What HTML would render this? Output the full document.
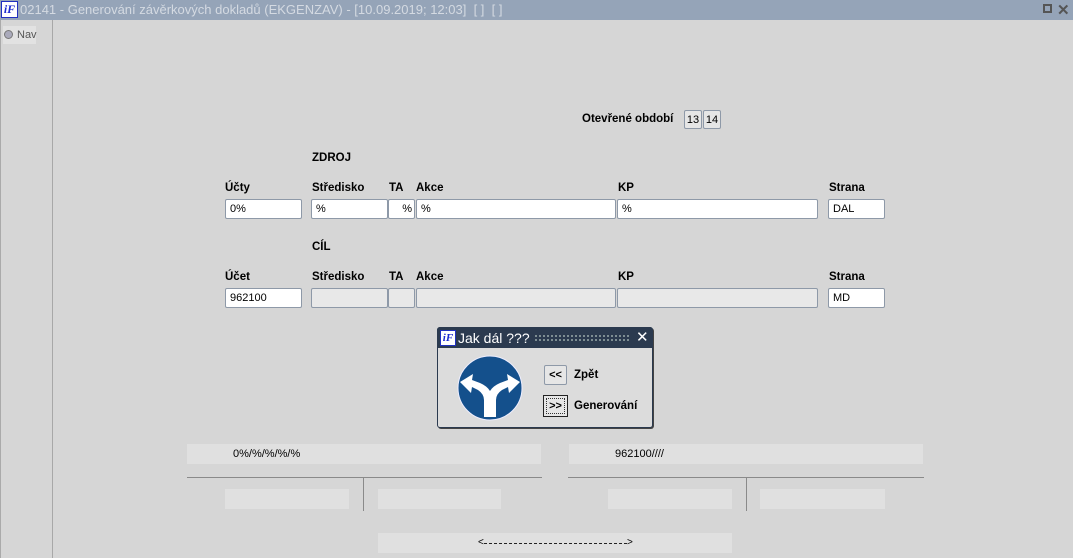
<!DOCTYPE html>
<html><head><meta charset="utf-8"><style>
*{margin:0;padding:0;box-sizing:border-box}
body{width:1073px;height:558px;background:#d6d6d6;position:relative;overflow:hidden;font-family:"Liberation Sans",Arial,sans-serif;font-size:11px;color:#000}
.a{position:absolute}
.lbl{position:absolute;font-weight:bold;font-size:11.5px}
.in{position:absolute;height:20px;background:#fff;border:1px solid #8e99a8;border-radius:2px;padding:3px 0 0 4px;font-size:11px}
.dis{background:#e8e8e8}
.bx{position:absolute;background:#e0e0e0}
</style></head><body>
<div class="a" style="left:0;top:0;width:1073px;height:20px;background:#95a4b8"></div>
<div class="a" style="left:1px;top:1px;width:17px;height:17px;background:#fff;border:1px solid #2030c0;color:#1a2ad0;font:italic bold 12px 'Liberation Serif',serif;text-align:center;line-height:15px">iF</div>
<div class="a" style="left:20px;top:2px;font-size:13px;color:#d4dae2;white-space:nowrap">02141 - Generování závěrkových dokladů (EKGENZAV) - [10.09.2019; 12:03]&nbsp; [ ]&nbsp; [ ]</div>
<div class="a" style="left:1043px;top:4px;width:9px;height:9px;border:2px solid #555"></div>
<div class="a" style="left:1057px;top:1px;color:#555;font-size:15px;font-weight:bold">✕</div>
<div class="a" style="left:0;top:20px;width:53px;height:538px;border-right:1px solid #a8a8a8;border-left:1px solid #aaa"></div>
<div class="a" style="left:3px;top:26px;width:33px;height:18px;background:#e2e2e2"></div>
<div class="a" style="left:4px;top:30px;width:9px;height:9px;border-radius:50%;border:1px solid #777;background:#aab"></div>
<div class="a" style="left:17px;top:29px;color:#555;font-size:11px">Nav</div>

<div class="lbl" style="left:582px;top:113px">Otevřené období</div>
<div class="a" style="left:684px;top:110px;width:18px;height:19px;border:1px solid #8e99a8;background:#e6e6e6;border-radius:2px;text-align:center;padding-top:3px">13</div>
<div class="a" style="left:703px;top:110px;width:18px;height:19px;border:1px solid #8e99a8;background:#e6e6e6;border-radius:2px;text-align:center;padding-top:3px">14</div>

<div class="lbl" style="left:312px;top:152px">ZDROJ</div>
<div class="lbl" style="left:225px;top:182px">Účty</div>
<div class="lbl" style="left:312px;top:182px">Středisko</div>
<div class="lbl" style="left:389px;top:182px">TA</div>
<div class="lbl" style="left:416px;top:182px">Akce</div>
<div class="lbl" style="left:618px;top:182px">KP</div>
<div class="lbl" style="left:829px;top:182px">Strana</div>
<div class="in" style="left:225px;top:199px;width:77px">0%</div>
<div class="in" style="left:311px;top:199px;width:77px">%</div>
<div class="in" style="left:388px;top:199px;width:27px;text-align:right;padding-right:2px">%</div>
<div class="in" style="left:416px;top:199px;width:200px">%</div>
<div class="in" style="left:617px;top:199px;width:201px">%</div>
<div class="in" style="left:828px;top:199px;width:57px">DAL</div>

<div class="lbl" style="left:312px;top:241px">CÍL</div>
<div class="lbl" style="left:225px;top:271px">Účet</div>
<div class="lbl" style="left:312px;top:271px">Středisko</div>
<div class="lbl" style="left:389px;top:271px">TA</div>
<div class="lbl" style="left:416px;top:271px">Akce</div>
<div class="lbl" style="left:618px;top:271px">KP</div>
<div class="lbl" style="left:829px;top:271px">Strana</div>
<div class="in" style="left:225px;top:288px;width:77px">962100</div>
<div class="in dis" style="left:311px;top:288px;width:77px"></div>
<div class="in dis" style="left:388px;top:288px;width:27px"></div>
<div class="in dis" style="left:416px;top:288px;width:200px"></div>
<div class="in dis" style="left:617px;top:288px;width:201px"></div>
<div class="in" style="left:828px;top:288px;width:57px">MD</div>

<div class="a" style="left:437px;top:327px;width:216px;height:101px;background:#dcdcdc;border:1px solid #2b3a4f;border-radius:3px;box-shadow:1px 1px 0 #444"></div>
<div class="a" style="left:437px;top:327px;width:216px;height:21px;background:#2b3a4f;border-radius:3px 3px 0 0"></div>
<div class="a" style="left:440px;top:330px;width:16px;height:16px;background:#fff;border:1px solid #2030c0;color:#1a2ad0;font:italic bold 11px 'Liberation Serif',serif;text-align:center;line-height:14px">iF</div>
<div class="a" style="left:458px;top:330px;color:#fff;font-size:14px">Jak dál ???</div>
<div class="a" style="left:534px;top:334px;width:97px;height:8px;background-image:radial-gradient(#9aa 0.8px,transparent 1px);background-size:4px 4px"></div>
<div class="a" style="left:636px;top:328px;color:#fff;font-size:15px">✕</div>
<svg class="a" style="left:456px;top:354px" width="68" height="68" viewBox="0 0 68 68">
<circle cx="34" cy="34" r="32" fill="#14508c" stroke="#eef" stroke-width="1"/>
<path d="M28 63 L28 46 Q28 40 22 36 L16 33 L15 39 L4 28 L17 20 L16 26 L24 29 Q31 32 34 37 Q37 32 44 29 L52 26 L51 20 L64 28 L53 39 L52 33 L46 36 Q40 40 40 46 L40 63 Z" fill="#fff"/>
</svg>
<div class="a" style="left:544px;top:365px;width:23px;height:20px;border:1px solid #8e99a8;background:#e6e6e6;border-radius:2px;text-align:center;padding-top:3px;font-weight:bold">&lt;&lt;</div>
<div class="lbl" style="left:574px;top:369px">Zpět</div>
<div class="a" style="left:543px;top:395px;width:25px;height:22px;border:1px solid #222;background:#e6e6e6;text-align:center;padding-top:4px;font-weight:bold;outline:1px dotted #333;outline-offset:-4px">&gt;&gt;</div>
<div class="lbl" style="left:574px;top:400px">Generování</div>

<div class="bx" style="left:187px;top:444px;width:354px;height:20px"></div>
<div class="a" style="left:233px;top:448px">0%/%/%/%/%</div>
<div class="bx" style="left:569px;top:444px;width:354px;height:20px"></div>
<div class="a" style="left:615px;top:448px">962100////</div>
<div class="a" style="left:187px;top:477px;width:355px;height:1px;background:#8a8a8a"></div>
<div class="a" style="left:568px;top:477px;width:356px;height:1px;background:#8a8a8a"></div>
<div class="a" style="left:363px;top:478px;width:1px;height:33px;background:#8a8a8a"></div>
<div class="a" style="left:746px;top:478px;width:1px;height:33px;background:#8a8a8a"></div>
<div class="bx" style="left:225px;top:489px;width:124px;height:20px"></div>
<div class="bx" style="left:378px;top:489px;width:123px;height:20px"></div>
<div class="bx" style="left:608px;top:489px;width:124px;height:20px"></div>
<div class="bx" style="left:760px;top:489px;width:125px;height:20px"></div>
<div class="bx" style="left:378px;top:533px;width:354px;height:20px"></div>
<div class="a" style="left:478px;top:537px;font-size:10px">&lt;</div>
<div class="a" style="left:484px;top:543px;width:143px;border-top:1px dashed #222"></div>
<div class="a" style="left:627px;top:537px;font-size:10px">&gt;</div>
</body></html>
